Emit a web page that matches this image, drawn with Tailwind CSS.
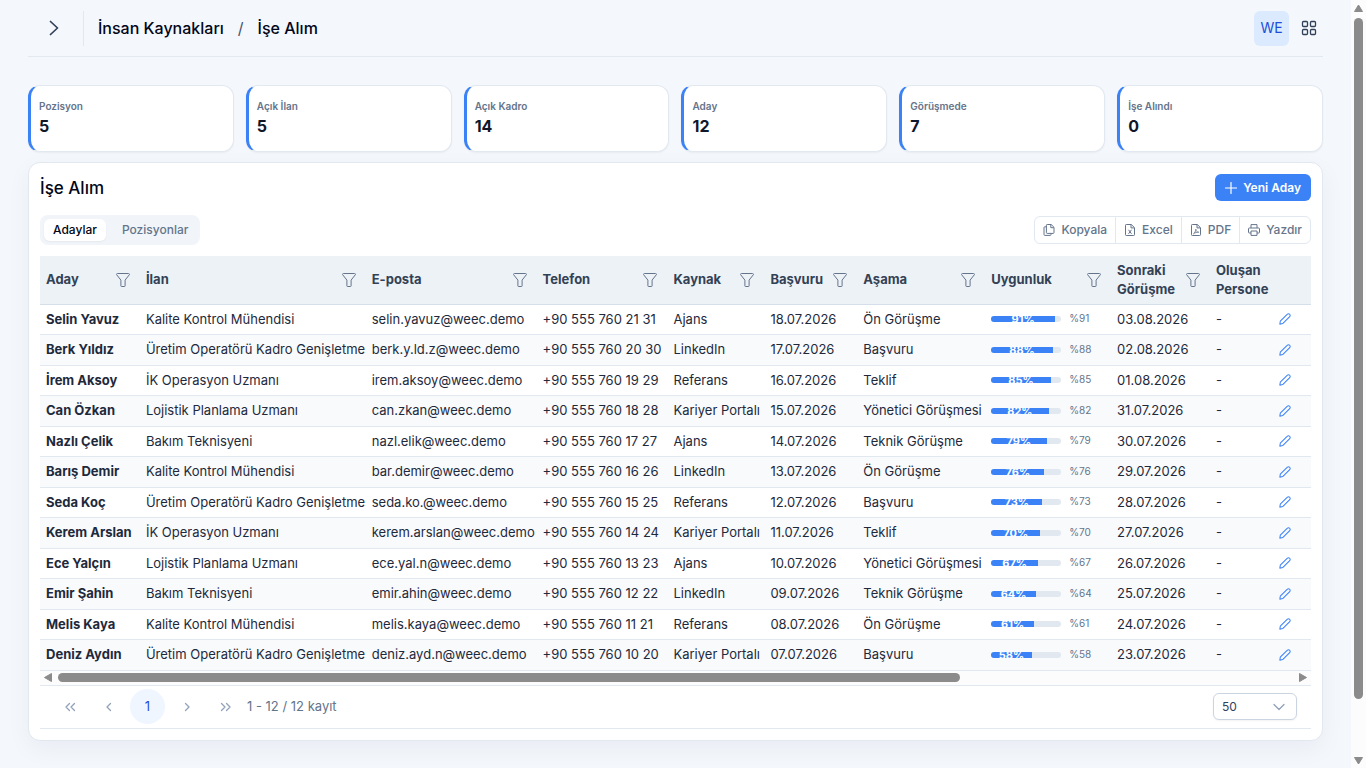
<!DOCTYPE html>
<html lang="tr">

<head>
    <meta charset="UTF-8">
    <meta name="viewport" content="width=device-width, initial-scale=1.0">
    <title>İşe Alım</title>
    <script src="https://cdn.jsdelivr.net/npm/@tailwindcss/browser@4"></script>
</head>

<body class="flex min-h-screen bg-[#f4f7fc] font-['Inter',sans-serif] text-[#1e293b]">

    <!-- Icon sprites -->
    <svg class="hidden">
        <symbol id="i-filter" viewBox="0 0 14 14"><path d="M1.4 .5h11.2c.8 0 1.2.7.7 1.3L9.1 7.1v5.8a.6.6 0 0 1-.6.6h-3a.6.6 0 0 1-.6-.6V7.1L.7 1.8C.2 1.2.6.5 1.4.5z" fill="none" stroke="currentColor" stroke-linejoin="round" /></symbol>
        <symbol id="i-pencil" viewBox="0 0 14 14"><path d="M1 13l.5-3.4L9.8 1.4a1.7 1.7 0 0 1 2.5 0l.2.2a1.7 1.7 0 0 1 0 2.5L4.3 12.3z" fill="none" stroke="currentColor" stroke-width="1.2" stroke-linejoin="round" /></symbol>
    </svg>

    <main class="min-w-0 flex-1 px-7 pb-7">
        <!-- Top bar -->
        <header class="flex h-[57px] items-center border-b border-[#e2e8f0]">
            <button class="ml-2 flex size-[35px] items-center justify-center text-slate-700" aria-label="Menü">
                <svg class="size-4" viewBox="0 0 16 16" fill="none" stroke="currentColor" stroke-width="1.7" stroke-linecap="round" stroke-linejoin="round"><path d="M4.500 1.500L11.500 8l-7 6.500" /></svg>
            </button>
            <nav class="ml-3 flex h-[35px] items-center gap-3.5 border-l border-[#e2e8f0] pl-3.5 text-base font-medium text-slate-950">
                <a href="#">İnsan Kaynakları</a>
                <span class="font-normal text-slate-600">/</span>
                <span>İşe Alım</span>
            </nav>
            <div class="ml-auto flex items-center gap-3">
                <button class="size-[35px] rounded-md bg-[#dbeafe] text-sm text-[#1d4ed8]">WE</button>
                <button class="mr-1.5 flex text-slate-700" aria-label="Uygulamalar">
                    <svg class="size-4" viewBox="0 0 16 16" fill="none" stroke="currentColor" stroke-width="1.3"><rect x="1.500" y="1.500" width="5" height="5" rx="1" /><rect x="9.500" y="1.500" width="5" height="5" rx="1" /><rect x="1.500" y="9.500" width="5" height="5" rx="1" /><rect x="9.500" y="9.500" width="5" height="5" rx="1" /></svg>
                </button>
            </div>
        </header>

        <!-- Summary cards -->
        <section id="cards" class="mt-7 grid grid-cols-6 gap-3"></section>

        <!-- Candidates panel -->
        <section class="mt-2.5 rounded-xl border border-[#e2e8f0] bg-white px-[11px] pt-[11px] pb-[11px] shadow-[0_8px_24px_rgba(15,23,42,0.05)]">
            <div class="flex items-center justify-between">
                <h1 class="text-[17px] leading-6 font-medium text-slate-950">İşe Alım</h1>
                <button class="flex h-[27px] items-center gap-1.5 rounded-md bg-[#3b82f6] px-2.5 text-xs font-semibold text-white">
                    <svg class="size-3" viewBox="0 0 12 12" fill="none" stroke="currentColor" stroke-width="1.2" stroke-linecap="round"><path d="M6 .5v11M.5 6h11" /></svg>
                    Yeni Aday
                </button>
            </div>

            <div class="mt-3.5 flex items-center justify-between">
                <div class="flex h-[30px] items-center rounded-lg bg-[#f1f5f9] p-1 text-xs font-medium" role="tablist">
                    <button role="tab" aria-selected="true" class="h-[22px] rounded-md bg-white px-[9px] text-slate-950 shadow-xs">Adaylar</button>
                    <button role="tab" aria-selected="false" class="h-[22px] rounded-md pr-2 pl-4 text-[#64748b]">Pozisyonlar</button>
                </div>
                <div class="flex h-7 divide-x divide-[#e2e8f0] rounded-md border border-[#e2e8f0] text-xs font-medium text-[#64748b]">
                    <button class="flex items-center gap-1.5 px-2">
                        <svg class="size-3" viewBox="0 0 12 12" fill="none" stroke="currentColor" stroke-linejoin="round"><path d="M4.200.5h4L11 3.300v5.300a.8.8 0 0 1-.8.8h-6a.8.8 0 0 1-.8-.8V1.300a.8.8 0 0 1 .8-.8zM7.800.7v3h3M3.200 2.800H1.800a.8.8 0 0 0-.8.8v7a.8.8 0 0 0 .8.8h5.400a.8.8 0 0 0 .8-.8V9.600" /></svg>
                        Kopyala
                    </button>
                    <button class="flex items-center gap-1.5 px-2">
                        <svg class="size-3" viewBox="0 0 12 12" fill="none" stroke="currentColor" stroke-linejoin="round"><path d="M2.300.5h5l3.200 3.200v7a.8.8 0 0 1-.8.8H2.300a.8.8 0 0 1-.8-.8V1.300a.8.8 0 0 1 .8-.8zM7 .6v3.300h3.300M4.500 5.800l3 4M7.500 5.800l-3 4" /></svg>
                        Excel
                    </button>
                    <button class="flex items-center gap-1.5 px-2">
                        <svg class="size-3" viewBox="0 0 12 12" fill="none" stroke="currentColor" stroke-linejoin="round"><path d="M2.300.5h5l3.200 3.200v7a.8.8 0 0 1-.8.8H2.300a.8.8 0 0 1-.8-.8V1.300a.8.8 0 0 1 .8-.8zM7 .6v3.300h3.300" /><path stroke-width=".8" d="M3.500 9.800c1.200-.8 2.100-2.400 2.300-4.600.4 2 1.300 3 3 3-2 0-3.600.4-5.300 1.600z" /></svg>
                        PDF
                    </button>
                    <button class="flex items-center gap-1.5 px-2">
                        <svg class="size-3" viewBox="0 0 12 12" fill="none" stroke="currentColor" stroke-linejoin="round"><path d="M3 4V.6h6V4M3 9H1.300a.8.8 0 0 1-.8-.8V4.800a.8.8 0 0 1 .8-.8h9.400a.8.8 0 0 1 .8.8v3.400a.8.8 0 0 1-.8.8H9M3 7h6v4.400H3z" /></svg>
                        Yazdır
                    </button>
                </div>
            </div>

            <!-- Table -->
            <table class="mt-[11px] w-full table-fixed border-collapse text-left text-[13px] leading-normal whitespace-nowrap">
                <thead class="bg-[#edf2f7]">
                    <tr id="head" class="h-12 border-b border-[#d5dfea]"></tr>
                </thead>
                <tbody id="rows"></tbody>
            </table>

            <!-- Horizontal scrollbar -->
            <div class="flex h-[14px] items-center gap-1.5 bg-[#fcfcfc] px-1 text-[#8b8b8b]" aria-hidden="true">
                <svg class="h-[9px] w-2" viewBox="0 0 8 9" fill="currentColor"><path d="M7.500 .5v8L.5 4.500z" stroke="currentColor" stroke-linejoin="round" /></svg>
                <div class="flex-1"><div class="h-[9px] w-[73%] rounded-full bg-[#8b8b8b]"></div></div>
                <svg class="h-[9px] w-2" viewBox="0 0 8 9" fill="currentColor"><path d="M.5 .5v8l7-4z" stroke="currentColor" stroke-linejoin="round" /></svg>
            </div>

            <!-- Paginator -->
            <div class="flex h-11 items-center border-y border-[#e2e8f0] pr-3.5 pl-3 text-[13px] text-[#64748b]">
                <button class="flex size-[35px] items-center justify-center text-slate-400" aria-label="İlk sayfa"><svg class="size-3" viewBox="0 0 12 12" fill="none" stroke="currentColor" stroke-width="1.3" stroke-linecap="round" stroke-linejoin="round"><path d="M5.500 2.500L2 6l3.500 3.500M10.500 2.500L7 6l3.500 3.500" /></svg></button>
                <button class="ml-1 flex size-[35px] items-center justify-center text-slate-400" aria-label="Önceki sayfa"><svg class="size-3" viewBox="0 0 12 12" fill="none" stroke="currentColor" stroke-width="1.3" stroke-linecap="round" stroke-linejoin="round"><path d="M7.500 2.500L4 6l3.500 3.500" /></svg></button>
                <button class="ml-1 size-[35px] rounded-full bg-[#eff6ff] text-[#1d4ed8]">1</button>
                <button class="ml-1 flex size-[35px] items-center justify-center text-slate-400" aria-label="Sonraki sayfa"><svg class="size-3" viewBox="0 0 12 12" fill="none" stroke="currentColor" stroke-width="1.3" stroke-linecap="round" stroke-linejoin="round"><path d="M4.500 2.500L8 6 4.500 9.500" /></svg></button>
                <button class="ml-1 flex size-[35px] items-center justify-center text-slate-400" aria-label="Son sayfa"><svg class="size-3" viewBox="0 0 12 12" fill="none" stroke="currentColor" stroke-width="1.3" stroke-linecap="round" stroke-linejoin="round"><path d="M1.500 2.500L5 6 1.500 9.500M6.500 2.500L10 6 6.500 9.500" /></svg></button>
                <span class="ml-1">1 - 12 / 12 kayıt</span>
                <div class="relative ml-auto">
                    <select aria-label="Sayfa boyutu" class="h-[27px] w-[84px] appearance-none rounded-md border border-[#cbd5e1] bg-white px-2 text-xs text-slate-700 shadow-xs">
                        <option>50</option>
                    </select>
                    <svg class="pointer-events-none absolute top-2 right-3 size-3 text-slate-400" viewBox="0 0 12 12" fill="none" stroke="currentColor" stroke-width="1.3" stroke-linecap="round" stroke-linejoin="round"><path d="M1 3.500l5 5 5-5" /></svg>
                </div>
            </div>
        </section>
    </main>

    <!-- Page scrollbar -->
    <div class="flex w-[15px] flex-col items-center gap-1.5 bg-[#fcfcfc] py-1 text-[#8b8b8b]" aria-hidden="true">
        <svg class="h-2 w-[9px]" viewBox="0 0 9 8" fill="currentColor"><path d="M.5 7.500h8L4.500 1z" stroke="currentColor" stroke-linejoin="round" /></svg>
        <div class="w-full flex-1 px-[3px]"><div class="h-[93%] w-[9px] rounded-full bg-[#8b8b8b]"></div></div>
        <svg class="h-2 w-[9px]" viewBox="0 0 9 8" fill="currentColor"><path d="M.5 .5h8L4.500 7z" stroke="currentColor" stroke-linejoin="round" /></svg>
    </div>

    <script>
        const cards = [['Pozisyon', 5], ['Açık İlan', 5], ['Açık Kadro', 14], ['Aday', 12], ['Görüşmede', 7], ['İşe Alındı', 0]];

        // [label, width, has filter]
        const columns = [
            ['Aday', 100, true], ['İlan', 226, true], ['E-posta', 171, true], ['Telefon', 131, true],
            ['Kaynak', 97, true], ['Başvuru', 93, true], ['Aşama', 128, true], ['Uygunluk', 126, true],
            ['Sonraki<br>Görüşme', 99, true], ['Oluşan<br>Persone', 62, false], ['', 39, false]
        ];

        const rows = [
            ['Selin Yavuz', 'Kalite Kontrol Mühendisi', 'selin.yavuz@weec.demo', '+90 555 760 21 31', 'Ajans', '18.07.2026', 'Ön Görüşme', 91, '03.08.2026'],
            ['Berk Yıldız', 'Üretim Operatörü Kadro Genişletme', 'berk.y.ld.z@weec.demo', '+90 555 760 20 30', 'LinkedIn', '17.07.2026', 'Başvuru', 88, '02.08.2026'],
            ['İrem Aksoy', 'İK Operasyon Uzmanı', 'irem.aksoy@weec.demo', '+90 555 760 19 29', 'Referans', '16.07.2026', 'Teklif', 85, '01.08.2026'],
            ['Can Özkan', 'Lojistik Planlama Uzmanı', 'can.zkan@weec.demo', '+90 555 760 18 28', 'Kariyer Portalı', '15.07.2026', 'Yönetici Görüşmesi', 82, '31.07.2026'],
            ['Nazlı Çelik', 'Bakım Teknisyeni', 'nazl.elik@weec.demo', '+90 555 760 17 27', 'Ajans', '14.07.2026', 'Teknik Görüşme', 79, '30.07.2026'],
            ['Barış Demir', 'Kalite Kontrol Mühendisi', 'bar.demir@weec.demo', '+90 555 760 16 26', 'LinkedIn', '13.07.2026', 'Ön Görüşme', 76, '29.07.2026'],
            ['Seda Koç', 'Üretim Operatörü Kadro Genişletme', 'seda.ko.@weec.demo', '+90 555 760 15 25', 'Referans', '12.07.2026', 'Başvuru', 73, '28.07.2026'],
            ['Kerem Arslan', 'İK Operasyon Uzmanı', 'kerem.arslan@weec.demo', '+90 555 760 14 24', 'Kariyer Portalı', '11.07.2026', 'Teklif', 70, '27.07.2026'],
            ['Ece Yalçın', 'Lojistik Planlama Uzmanı', 'ece.yal.n@weec.demo', '+90 555 760 13 23', 'Ajans', '10.07.2026', 'Yönetici Görüşmesi', 67, '26.07.2026'],
            ['Emir Şahin', 'Bakım Teknisyeni', 'emir.ahin@weec.demo', '+90 555 760 12 22', 'LinkedIn', '09.07.2026', 'Teknik Görüşme', 64, '25.07.2026'],
            ['Melis Kaya', 'Kalite Kontrol Mühendisi', 'melis.kaya@weec.demo', '+90 555 760 11 21', 'Referans', '08.07.2026', 'Ön Görüşme', 61, '24.07.2026'],
            ['Deniz Aydın', 'Üretim Operatörü Kadro Genişletme', 'deniz.ayd.n@weec.demo', '+90 555 760 10 20', 'Kariyer Portalı', '07.07.2026', 'Başvuru', 58, '23.07.2026']
        ];

        // Summary cards
        document.getElementById('cards').innerHTML = cards.map(([label, value]) => `
            <div class="h-[67px] rounded-xl border border-l-3 border-[#e2e8f0] border-l-[#3b82f6] bg-white px-2 pt-3 shadow-xs">
                <div class="text-[10px] leading-4 font-semibold text-[#64748b]">${label}</div>
                <div class="text-base leading-6 font-bold text-[#0f172a]">${value}</div>
            </div>`).join('');

        // Header cells
        document.getElementById('head').innerHTML = columns.map(([label, width, filter]) => `
            <th class="py-0 pr-2.5 pl-1.5 leading-[19px] font-bold text-[#334155]" style="width:${width / 12.72}%">
                <div class="flex items-center justify-between">
                    <span>${label}</span>
                    ${filter ? '<button class="text-[#64748b]" aria-label="Filtrele"><svg class="size-3.5"><use href="#i-filter" /></svg></button>' : ''}
                </div>
            </th>`).join('');

        // Progress bar cell
        function fitCell(value) {
            return `<div class="flex items-center gap-2">
                <div class="h-1.5 w-[70px] overflow-hidden rounded-full bg-[#e2e8f0]">
                    <div class="flex h-full items-center justify-center overflow-hidden bg-[#3b82f6] text-[11px] font-bold text-white" style="width:${value}%">${value}%</div>
                </div>
                <span class="pb-0.5 text-[10px] leading-4 text-[#64748b]">%${value}</span>
            </div>`;
        }

        document.getElementById('rows').innerHTML = rows.map(row => `
            <tr class="border-b border-[#e2e8f0] even:bg-[#f8fafc]">
                ${row.map((cell, i) => `<td class="py-[5px] pl-1.5 ${i === 0 ? 'font-bold' : ''}">${i === 7 ? fitCell(cell) : cell}</td>`).join('')}
                <td class="py-[5px] pl-1.5">-</td>
                <td class="py-[5px] pl-[7px]"><button class="flex text-[#3b82f6]" aria-label="Düzenle"><svg class="size-3"><use href="#i-pencil" /></svg></button></td>
            </tr>`).join('');
    </script>

</body>

</html>
